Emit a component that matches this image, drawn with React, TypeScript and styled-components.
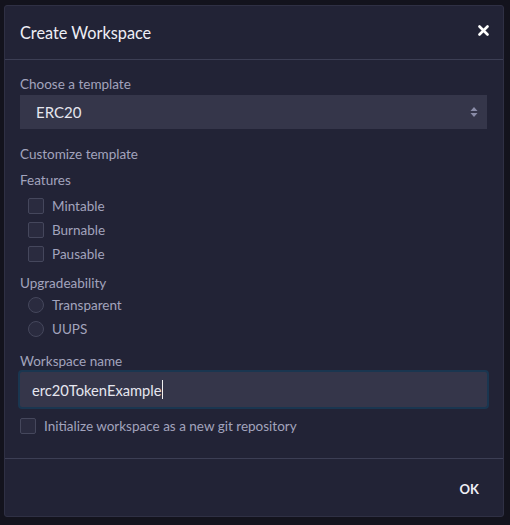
import React from "react";
import styled, { createGlobalStyle } from "styled-components";

const Global = createGlobalStyle`
  html, body { margin: 0; padding: 0; background: #13131d; }
  body { font-family: "Lato", "Noto Sans", sans-serif; }
  * { box-sizing: border-box; }
`;

const Page = styled.div`
  width: 510px;
  height: 525px;
  padding: 5px 6px 8px 4px;
  background: #13131d;
`;

const Modal = styled.div`
  width: 500px;
  height: 512px;
  background: #222336;
  border: 1px solid #2f3044;
  border-radius: 3px;
  display: flex;
  flex-direction: column;
`;

const Header = styled.div`
  height: 54px;
  display: flex;
  align-items: center;
  justify-content: space-between;
  padding: 0 14px 0 15px;
  border-bottom: 1px solid #3c3e54;
`;

const Title = styled.h5`
  margin: 0;
  font-size: 16.3px;
  font-weight: 400;
  color: #eeeef5;
`;

const Close = styled.button`
  background: none;
  border: none;
  padding: 0;
  width: 11px;
  height: 11px;
  margin-bottom: 5px;
  display: flex;
  align-items: center;
  justify-content: center;
  cursor: pointer;
`;

const Body = styled.div`
  flex: 1;
  padding: 15px 16px 0 15px;
  display: flex;
  flex-direction: column;
`;

const Label = styled.div<{ $mt?: number }>`
  font-size: 13.5px;
  color: #a2a3bd;
  line-height: 18px;
  margin-top: ${(p) => p.$mt ?? 0}px;
`;

const SelectBox = styled.div`
  margin-top: 2px;
  height: 34px;
  background: #35364a;
  display: flex;
  align-items: center;
  justify-content: space-between;
  padding: 0 9px 0 16px;
  font-size: 15px;
  color: #e6e6ef;
`;

const OptionGroup = styled.div<{ $mt: number }>`
  margin-top: ${(p) => p.$mt}px;
  display: flex;
  flex-direction: column;
`;

const Option = styled.label`
  display: flex;
  align-items: center;
  height: 24px;
  padding-left: 8px;
  font-size: 13.5px;
  color: #a2a3bd;
  gap: 8px;
`;

const Box = styled.span<{ $round?: boolean }>`
  width: 16px;
  height: 16px;
  border: 1px solid #45475c;
  background: #2a2b3f;
  border-radius: ${(p) => (p.$round ? "50%" : "2px")};
  display: inline-block;
`;

const InputWrap = styled.div`
  margin-left: -2px;
  margin-right: -2px;
  height: 39px;
  border: 2px solid #1a3650;
  border-radius: 4px;
  background: #35364a;
  display: flex;
  align-items: center;
  padding-left: 12px;
  font-size: 14.7px;
  color: #e6e6ef;
`;

const Caret = styled.span`
  display: inline-block;
  width: 1px;
  height: 19px;
  background: #f0f0f0;
`;

const GitRow = styled.label`
  margin-top: 8px;
  display: flex;
  align-items: center;
  gap: 8px;
  font-size: 13.5px;
  color: #a2a3bd;
  height: 18px;
`;

const Footer = styled.div`
  height: 58px;
  border-top: 1px solid #3c3e54;
  display: flex;
  align-items: center;
  justify-content: flex-end;
  padding-right: 24px;
`;

const OkButton = styled.button`
  background: none;
  border: none;
  color: #eeeef5;
  font-family: inherit;
  font-weight: 700;
  font-size: 13px;
  padding: 0;
  margin-top: 2px;
`;

export default function App() {
  return (
    <>
      <Global />
      <Page>
        <Modal>
          <Header>
            <Title>Create Workspace</Title>
            <Close aria-label="close">
              <svg width="11" height="11" viewBox="0 0 11 11">
                <path d="M1.5 1.5 L9.5 9.5 M9.5 1.5 L1.5 9.5" stroke="#ffffff" strokeWidth="2.6" strokeLinecap="round" />
              </svg>
            </Close>
          </Header>
          <Body>
            <Label>Choose a template</Label>
            <SelectBox>
              <span>ERC20</span>
              <svg width="8" height="12" viewBox="0 0 8 12">
                <path d="M4 1 L7.5 5 L0.5 5 Z M4 11 L7.5 7 L0.5 7 Z" fill="#8a8ca8" />
              </svg>
            </SelectBox>
            <Label $mt={16}>Customize template</Label>
            <Label $mt={8}>Features</Label>
            <OptionGroup $mt={5}>
              <Option><Box />Mintable</Option>
              <Option><Box />Burnable</Option>
              <Option><Box />Pausable</Option>
            </OptionGroup>
            <Label $mt={8}>Upgradeability</Label>
            <OptionGroup $mt={1}>
              <Option><Box $round />Transparent</Option>
              <Option><Box $round />UUPS</Option>
            </OptionGroup>
            <Label $mt={11}>Workspace name</Label>
            <InputWrap>
              erc20TokenExample<Caret />
            </InputWrap>
            <GitRow><Box />Initialize workspace as a new git repository</GitRow>
          </Body>
          <Footer>
            <OkButton>OK</OkButton>
          </Footer>
        </Modal>
      </Page>
    </>
  );
}
